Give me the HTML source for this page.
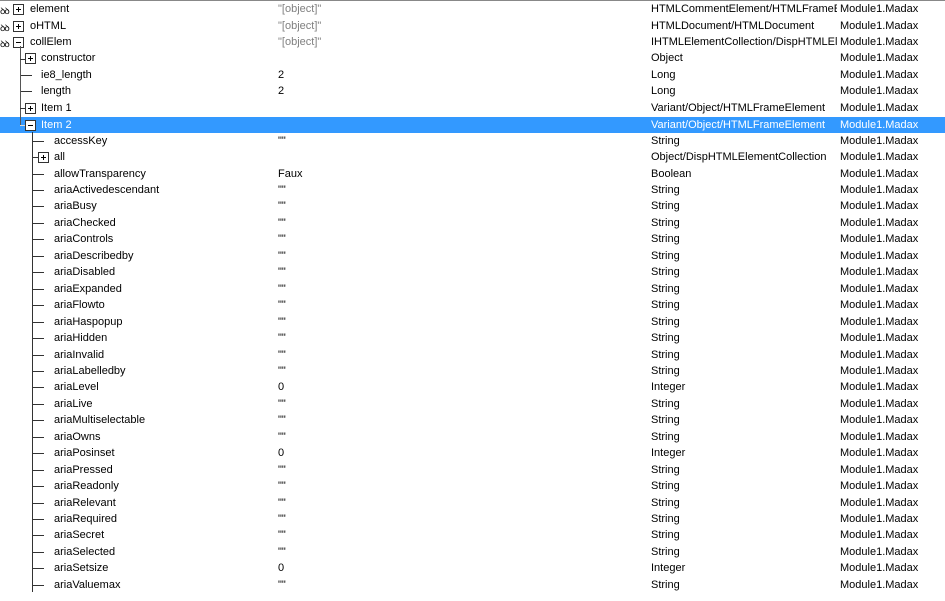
<!DOCTYPE html>
<html><head><meta charset="utf-8"><style>
*{margin:0;padding:0}
body{width:945px;height:587px;overflow:hidden;background:#fff;font-family:"Liberation Sans",Arial,sans-serif;font-size:11px;color:#000;position:relative}
#w{position:absolute;left:0;top:1px;width:945px;height:600px}
.r{position:absolute;left:0;width:945px;height:16px;line-height:16px;white-space:nowrap}
.r.sel{background:#3399ff;color:#fff}
.n,.v,.t,.c{position:absolute;top:0}
.v{left:278px}.t{left:651px;width:186px;overflow:hidden}.c{left:840px}
.g{color:#808080}
.b{position:absolute;top:3px;width:9px;height:9px;border:1px solid #333;background:#fff}
.b:before{content:"";position:absolute;left:2px;top:4px;width:5px;height:1px;background:#000}
.b.p:after{content:"";position:absolute;left:4px;top:2px;width:1px;height:5px;background:#000}
.h{position:absolute;top:8px;height:1px;background:#333}
.vl{position:absolute;width:1px;background:#333}
.gl{position:absolute;top:2px;left:0;font-size:9px;letter-spacing:-1px}
</style></head><body>
<div style="position:absolute;left:0;top:0;width:945px;height:1px;background:#888"></div>
<div id="w">
<div class="r" style="top:0px"><span class="gl">ꝺꝺ</span><span class="b p" style="left:13px"></span><span class="n" style="left:30px">element</span><span class="v g">"[object]"</span><span class="t">HTMLCommentElement/HTMLFrameElement</span><span class="c">Module1.Madax</span></div>
<div class="r" style="top:16.5px"><span class="gl">ꝺꝺ</span><span class="b p" style="left:13px"></span><span class="n" style="left:30px">oHTML</span><span class="v g">"[object]"</span><span class="t">HTMLDocument/HTMLDocument</span><span class="c">Module1.Madax</span></div>
<div class="r" style="top:33px"><span class="gl">ꝺꝺ</span><span class="b" style="left:13px"></span><span class="n" style="left:30px">collElem</span><span class="v g">"[object]"</span><span class="t">IHTMLElementCollection/DispHTMLElementCollection</span><span class="c">Module1.Madax</span></div>
<div class="r" style="top:49.4px"><span class="b p" style="left:25px"></span><span class="n" style="left:41px">constructor</span><span class="t">Object</span><span class="c">Module1.Madax</span></div>
<div class="r" style="top:65.8px"><span class="h" style="left:20px;width:12px"></span><span class="n" style="left:41px">ie8_length</span><span class="v">2</span><span class="t">Long</span><span class="c">Module1.Madax</span></div>
<div class="r" style="top:82.2px"><span class="h" style="left:20px;width:12px"></span><span class="n" style="left:41px">length</span><span class="v">2</span><span class="t">Long</span><span class="c">Module1.Madax</span></div>
<div class="r" style="top:98.7px"><span class="b p" style="left:25px"></span><span class="n" style="left:41px">Item 1</span><span class="t">Variant/Object/HTMLFrameElement</span><span class="c">Module1.Madax</span></div>
<div class="r sel" style="top:115.5px"><span class="n" style="left:41px">Item 2</span><span class="t">Variant/Object/HTMLFrameElement</span><span class="c">Module1.Madax</span></div>

<div class="vl" style="left:20px;top:45px;height:79px;background:#555"></div>
<div class="h" style="left:20px;top:58px;width:6px"></div>
<div class="h" style="left:20px;top:107px;width:6px"></div>
<div class="h" style="left:20px;top:124px;width:6px;background:#ddd"></div>
<div class="b" style="left:25px;top:119px"></div>
<div class="vl" style="left:32px;top:131px;height:460px"></div>

<div class="r" style="top:131.6px"><span class="h" style="left:32px;width:12px"></span><span class="n" style="left:54px">accessKey</span><span class="v">""</span><span class="t">String</span><span class="c">Module1.Madax</span></div>
<div class="r" style="top:148.1px"><span class="b p" style="left:38px"></span><span class="h" style="left:32px;width:6px"></span><span class="n" style="left:54px">all</span><span class="t">Object/DispHTMLElementCollection</span><span class="c">Module1.Madax</span></div>
<div class="r" style="top:164.5px"><span class="h" style="left:32px;width:12px"></span><span class="n" style="left:54px">allowTransparency</span><span class="v">Faux</span><span class="t">Boolean</span><span class="c">Module1.Madax</span></div>
<div class="r" style="top:181px"><span class="h" style="left:32px;width:12px"></span><span class="n" style="left:54px">ariaActivedescendant</span><span class="v">""</span><span class="t">String</span><span class="c">Module1.Madax</span></div>
<div class="r" style="top:197.4px"><span class="h" style="left:32px;width:12px"></span><span class="n" style="left:54px">ariaBusy</span><span class="v">""</span><span class="t">String</span><span class="c">Module1.Madax</span></div>
<div class="r" style="top:213.9px"><span class="h" style="left:32px;width:12px"></span><span class="n" style="left:54px">ariaChecked</span><span class="v">""</span><span class="t">String</span><span class="c">Module1.Madax</span></div>
<div class="r" style="top:230.3px"><span class="h" style="left:32px;width:12px"></span><span class="n" style="left:54px">ariaControls</span><span class="v">""</span><span class="t">String</span><span class="c">Module1.Madax</span></div>
<div class="r" style="top:246.8px"><span class="h" style="left:32px;width:12px"></span><span class="n" style="left:54px">ariaDescribedby</span><span class="v">""</span><span class="t">String</span><span class="c">Module1.Madax</span></div>
<div class="r" style="top:263.2px"><span class="h" style="left:32px;width:12px"></span><span class="n" style="left:54px">ariaDisabled</span><span class="v">""</span><span class="t">String</span><span class="c">Module1.Madax</span></div>
<div class="r" style="top:279.7px"><span class="h" style="left:32px;width:12px"></span><span class="n" style="left:54px">ariaExpanded</span><span class="v">""</span><span class="t">String</span><span class="c">Module1.Madax</span></div>
<div class="r" style="top:296.1px"><span class="h" style="left:32px;width:12px"></span><span class="n" style="left:54px">ariaFlowto</span><span class="v">""</span><span class="t">String</span><span class="c">Module1.Madax</span></div>
<div class="r" style="top:312.6px"><span class="h" style="left:32px;width:12px"></span><span class="n" style="left:54px">ariaHaspopup</span><span class="v">""</span><span class="t">String</span><span class="c">Module1.Madax</span></div>
<div class="r" style="top:329px"><span class="h" style="left:32px;width:12px"></span><span class="n" style="left:54px">ariaHidden</span><span class="v">""</span><span class="t">String</span><span class="c">Module1.Madax</span></div>
<div class="r" style="top:345.5px"><span class="h" style="left:32px;width:12px"></span><span class="n" style="left:54px">ariaInvalid</span><span class="v">""</span><span class="t">String</span><span class="c">Module1.Madax</span></div>
<div class="r" style="top:361.9px"><span class="h" style="left:32px;width:12px"></span><span class="n" style="left:54px">ariaLabelledby</span><span class="v">""</span><span class="t">String</span><span class="c">Module1.Madax</span></div>
<div class="r" style="top:378.4px"><span class="h" style="left:32px;width:12px"></span><span class="n" style="left:54px">ariaLevel</span><span class="v">0</span><span class="t">Integer</span><span class="c">Module1.Madax</span></div>
<div class="r" style="top:394.8px"><span class="h" style="left:32px;width:12px"></span><span class="n" style="left:54px">ariaLive</span><span class="v">""</span><span class="t">String</span><span class="c">Module1.Madax</span></div>
<div class="r" style="top:411.3px"><span class="h" style="left:32px;width:12px"></span><span class="n" style="left:54px">ariaMultiselectable</span><span class="v">""</span><span class="t">String</span><span class="c">Module1.Madax</span></div>
<div class="r" style="top:427.7px"><span class="h" style="left:32px;width:12px"></span><span class="n" style="left:54px">ariaOwns</span><span class="v">""</span><span class="t">String</span><span class="c">Module1.Madax</span></div>
<div class="r" style="top:444.2px"><span class="h" style="left:32px;width:12px"></span><span class="n" style="left:54px">ariaPosinset</span><span class="v">0</span><span class="t">Integer</span><span class="c">Module1.Madax</span></div>
<div class="r" style="top:460.6px"><span class="h" style="left:32px;width:12px"></span><span class="n" style="left:54px">ariaPressed</span><span class="v">""</span><span class="t">String</span><span class="c">Module1.Madax</span></div>
<div class="r" style="top:477.1px"><span class="h" style="left:32px;width:12px"></span><span class="n" style="left:54px">ariaReadonly</span><span class="v">""</span><span class="t">String</span><span class="c">Module1.Madax</span></div>
<div class="r" style="top:493.5px"><span class="h" style="left:32px;width:12px"></span><span class="n" style="left:54px">ariaRelevant</span><span class="v">""</span><span class="t">String</span><span class="c">Module1.Madax</span></div>
<div class="r" style="top:510px"><span class="h" style="left:32px;width:12px"></span><span class="n" style="left:54px">ariaRequired</span><span class="v">""</span><span class="t">String</span><span class="c">Module1.Madax</span></div>
<div class="r" style="top:526.4px"><span class="h" style="left:32px;width:12px"></span><span class="n" style="left:54px">ariaSecret</span><span class="v">""</span><span class="t">String</span><span class="c">Module1.Madax</span></div>
<div class="r" style="top:542.9px"><span class="h" style="left:32px;width:12px"></span><span class="n" style="left:54px">ariaSelected</span><span class="v">""</span><span class="t">String</span><span class="c">Module1.Madax</span></div>
<div class="r" style="top:559.3px"><span class="h" style="left:32px;width:12px"></span><span class="n" style="left:54px">ariaSetsize</span><span class="v">0</span><span class="t">Integer</span><span class="c">Module1.Madax</span></div>
<div class="r" style="top:575.8px"><span class="h" style="left:32px;width:12px"></span><span class="n" style="left:54px">ariaValuemax</span><span class="v">""</span><span class="t">String</span><span class="c">Module1.Madax</span></div>
</div>
</body></html>
